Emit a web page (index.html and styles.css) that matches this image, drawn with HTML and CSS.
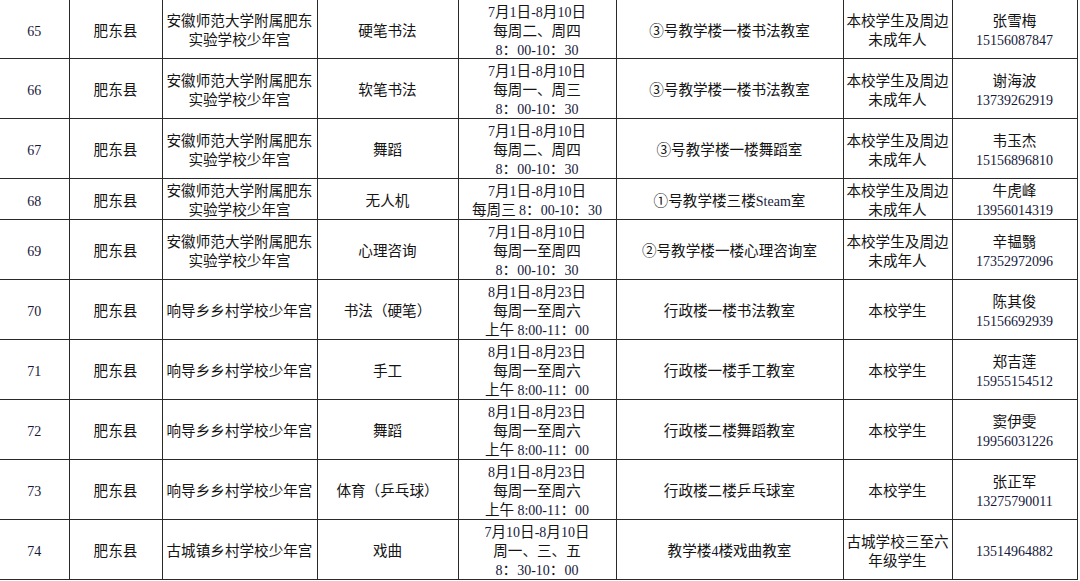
FILE: index.html
```html
<!DOCTYPE html>
<html lang="zh-CN">
<head>
<meta charset="utf-8">
<title>少年宫活动安排</title>
<link rel="stylesheet" href="styles.css">
</head>
<body>
<table class="sheet">
  <colgroup>
    <col class="c-no"><col class="c-county"><col class="c-school"><col class="c-course"><col class="c-time"><col class="c-place"><col class="c-target"><col class="c-contact">
  </colgroup>
  <tbody>
    <tr>
      <td><span class="d">65</span></td>
      <td>肥东县</td>
      <td>安徽师范大学附属肥东<br>实验学校少年宫</td>
      <td>硬笔书法</td>
      <td><span class="d">7</span>月<span class="d">1</span>日<span class="d">-8</span>月<span class="d">10</span>日<br>每周二、周四<br><span class="d">8</span>：<span class="d">00-10</span>：<span class="d">30</span></td>
      <td>③号教学楼一楼书法教室</td>
      <td>本校学生及周边<br>未成年人</td>
      <td>张雪梅<br><span class="d">15156087847</span></td>
    </tr>
    <tr>
      <td><span class="d">66</span></td>
      <td>肥东县</td>
      <td>安徽师范大学附属肥东<br>实验学校少年宫</td>
      <td>软笔书法</td>
      <td><span class="d">7</span>月<span class="d">1</span>日<span class="d">-8</span>月<span class="d">10</span>日<br>每周一、周三<br><span class="d">8</span>：<span class="d">00-10</span>：<span class="d">30</span></td>
      <td>③号教学楼一楼书法教室</td>
      <td>本校学生及周边<br>未成年人</td>
      <td>谢海波<br><span class="d">13739262919</span></td>
    </tr>
    <tr>
      <td><span class="d">67</span></td>
      <td>肥东县</td>
      <td>安徽师范大学附属肥东<br>实验学校少年宫</td>
      <td>舞蹈</td>
      <td><span class="d">7</span>月<span class="d">1</span>日<span class="d">-8</span>月<span class="d">10</span>日<br>每周二、周四<br><span class="d">8</span>：<span class="d">00-10</span>：<span class="d">30</span></td>
      <td>③号教学楼一楼舞蹈室</td>
      <td>本校学生及周边<br>未成年人</td>
      <td>韦玉杰<br><span class="d">15156896810</span></td>
    </tr>
    <tr class="short">
      <td><span class="d">68</span></td>
      <td>肥东县</td>
      <td>安徽师范大学附属肥东<br>实验学校少年宫</td>
      <td>无人机</td>
      <td><span class="d">7</span>月<span class="d">1</span>日<span class="d">-8</span>月<span class="d">10</span>日<br>每周三 <span class="d">8</span>：<span class="d">00-10</span>：<span class="d">30</span></td>
      <td>①号教学楼三楼<span class="d">Steam</span>室</td>
      <td>本校学生及周边<br>未成年人</td>
      <td>牛虎峰<br><span class="d">13956014319</span></td>
    </tr>
    <tr>
      <td><span class="d">69</span></td>
      <td>肥东县</td>
      <td>安徽师范大学附属肥东<br>实验学校少年宫</td>
      <td>心理咨询</td>
      <td><span class="d">7</span>月<span class="d">1</span>日<span class="d">-8</span>月<span class="d">10</span>日<br>每周一至周四<br><span class="d">8</span>：<span class="d">00-10</span>：<span class="d">30</span></td>
      <td>②号教学楼一楼心理咨询室</td>
      <td>本校学生及周边<br>未成年人</td>
      <td>辛韫翳<br><span class="d">17352972096</span></td>
    </tr>
    <tr>
      <td><span class="d">70</span></td>
      <td>肥东县</td>
      <td>响导乡乡村学校少年宫</td>
      <td>书法（硬笔）</td>
      <td><span class="d">8</span>月<span class="d">1</span>日<span class="d">-8</span>月<span class="d">23</span>日<br>每周一至周六<br>上午 <span class="d">8:00-11</span>：<span class="d">00</span></td>
      <td>行政楼一楼书法教室</td>
      <td>本校学生</td>
      <td>陈其俊<br><span class="d">15156692939</span></td>
    </tr>
    <tr>
      <td><span class="d">71</span></td>
      <td>肥东县</td>
      <td>响导乡乡村学校少年宫</td>
      <td>手工</td>
      <td><span class="d">8</span>月<span class="d">1</span>日<span class="d">-8</span>月<span class="d">23</span>日<br>每周一至周六<br>上午 <span class="d">8:00-11</span>：<span class="d">00</span></td>
      <td>行政楼一楼手工教室</td>
      <td>本校学生</td>
      <td>郑吉莲<br><span class="d">15955154512</span></td>
    </tr>
    <tr>
      <td><span class="d">72</span></td>
      <td>肥东县</td>
      <td>响导乡乡村学校少年宫</td>
      <td>舞蹈</td>
      <td><span class="d">8</span>月<span class="d">1</span>日<span class="d">-8</span>月<span class="d">23</span>日<br>每周一至周六<br>上午 <span class="d">8:00-11</span>：<span class="d">00</span></td>
      <td>行政楼二楼舞蹈教室</td>
      <td>本校学生</td>
      <td>窦伊雯<br><span class="d">19956031226</span></td>
    </tr>
    <tr>
      <td><span class="d">73</span></td>
      <td>肥东县</td>
      <td>响导乡乡村学校少年宫</td>
      <td>体育（乒乓球）</td>
      <td><span class="d">8</span>月<span class="d">1</span>日<span class="d">-8</span>月<span class="d">23</span>日<br>每周一至周六<br>上午 <span class="d">8:00-11</span>：<span class="d">00</span></td>
      <td>行政楼二楼乒乓球室</td>
      <td>本校学生</td>
      <td>张正军<br><span class="d">13275790011</span></td>
    </tr>
    <tr>
      <td><span class="d">74</span></td>
      <td>肥东县</td>
      <td>古城镇乡村学校少年宫</td>
      <td>戏曲</td>
      <td><span class="d">7</span>月<span class="d">10</span>日<span class="d">-8</span>月<span class="d">10</span>日<br>周一、三、五<br><span class="d">8</span>：<span class="d">30-10</span>：<span class="d">00</span></td>
      <td>教学楼<span class="d">4</span>楼戏曲教室</td>
      <td>古城学校三至六<br>年级学生</td>
      <td><span class="d">13514964882</span></td>
    </tr>
  </tbody>
</table>
</body>
</html>
```

FILE: styles.css
```css
html, body {
  margin: 0;
  padding: 0;
  background: #ffffff;
}

body {
  width: 1080px;
  height: 581px;
  overflow: hidden;
  font-family: "Noto Sans CJK SC", "Liberation Sans", sans-serif;
  color: #141414;
}

.sheet {
  border-collapse: collapse;
  table-layout: fixed;
  width: 1077px;
}

.c-no { width: 69px; }
.c-county { width: 93px; }
.c-school { width: 155px; }
.c-course { width: 141px; }
.c-time { width: 158px; }
.c-place { width: 227px; }
.c-target { width: 109px; }
.c-contact { width: 125px; }

.sheet td {
  border: 1px solid #2a2a2a;
  height: 59px;
  padding: 0 1px;
  text-align: center;
  vertical-align: middle;
  font-size: 14.6px;
  line-height: 19px;
  white-space: nowrap;
  overflow: hidden;
}

.sheet tr:first-child td {
  border-top: none;
  height: 58px;
}

.sheet td:first-child {
  border-left: none;
}

.sheet tr.short td {
  height: 40px;
}

.d {
  font-family: "Liberation Serif", "Noto Sans CJK SC", serif;
  font-size: 14px;
  line-height: 1;
  color: #16183a;
}
```
